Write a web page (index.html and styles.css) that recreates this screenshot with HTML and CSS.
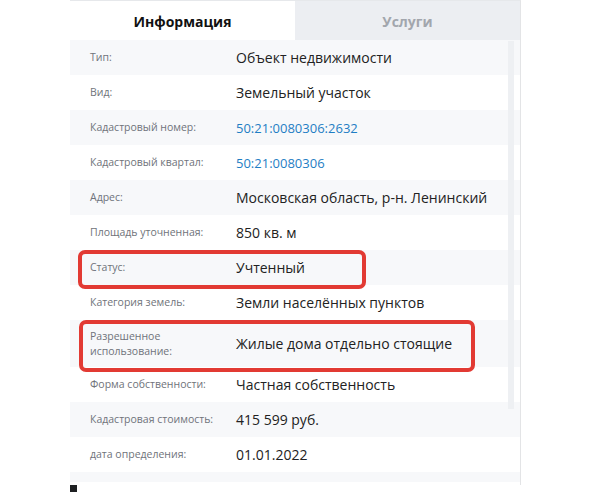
FILE: index.html
```html
<!DOCTYPE html>
<html lang="ru">
<head>
<meta charset="utf-8">
<link rel="stylesheet" href="styles.css">
</head>
<body>
<div class="page">
  <div class="panel">
    <div class="tabs">
      <div class="tab active">Информация</div>
      <div class="tab">Услуги</div>
    </div>
    <div class="rows">
      <div class="row"><div class="label">Тип:</div><div class="value">Объект недвижимости</div></div>
      <div class="row"><div class="label">Вид:</div><div class="value">Земельный участок</div></div>
      <div class="row"><div class="label">Кадастровый номер:</div><div class="value link">50:21:0080306:2632</div></div>
      <div class="row"><div class="label">Кадастровый квартал:</div><div class="value link">50:21:0080306</div></div>
      <div class="row"><div class="label">Адрес:</div><div class="value">Московская область, р-н. Ленинский</div></div>
      <div class="row"><div class="label">Площадь уточненная:</div><div class="value">850 кв. м</div></div>
      <div class="row"><div class="label">Статус:</div><div class="value">Учтенный</div></div>
      <div class="row"><div class="label">Категория земель:</div><div class="value">Земли населённых пунктов</div></div>
      <div class="row tall"><div class="label">Разрешенное<br>использование:</div><div class="value">Жилые дома отдельно стоящие</div></div>
      <div class="row"><div class="label">Форма собственности:</div><div class="value">Частная собственность</div></div>
      <div class="row"><div class="label">Кадастровая стоимость:</div><div class="value">415 599 руб.</div></div>
      <div class="row"><div class="label">дата определения:</div><div class="value">01.01.2022</div></div>
      <div class="row end"></div>
    </div>
    <div class="scrollbar"></div>
    <div class="mark mark-status"></div>
    <div class="mark mark-use"></div>
  </div>
  <div class="square"></div>
</div>
</body>
</html>
```
FILE: styles.css
```css
html, body {
  margin: 0;
  padding: 0;
  background: #ffffff;
}
body {
  font-family: "Open Sans", "Noto Sans", "DejaVu Sans", sans-serif;
  width: 591px;
  height: 492px;
  overflow: hidden;
}
.page {
  display: flex;
  flex-direction: column;
  padding-left: 70px;
}
.panel {
  position: relative;
  width: 450px;
  border-right: 1px solid #e3e4e6;
  border-top: 1px solid #e6e8eb;
  padding-bottom: 3px;
}
.tabs {
  display: grid;
  grid-template-columns: 225px 225px;
  height: 39px;
}
.tab {
  display: flex;
  align-items: center;
  justify-content: center;
  font-size: 14px;
  font-weight: 700;
  color: #a2a6ad;
  background: #eceef2;
  padding-top: 1px;
}
.tab.active {
  background: #ffffff;
  color: #111111;
}
.rows {
  display: flex;
  flex-direction: column;
}
.row {
  display: grid;
  grid-template-columns: 146px 1fr;
  align-items: center;
  height: 35px;
  padding-left: 20px;
}
.row:nth-child(odd) {
  background: #f7f8fa;
}
.row.tall {
  height: 47px;
}
.row.end {
  height: 10px;
}
.label {
  font-size: 10.5px;
  line-height: 15px;
  color: #6f737a;
}
.value {
  font-size: 14px;
  color: #222222;
}
.value.link {
  font-size: 13px;
  color: #1f7ec4;
}
.scrollbar {
  position: absolute;
  left: 438px;
  top: 40px;
  width: 6px;
  height: 368px;
  background: #eef0f3;
}
.mark {
  position: absolute;
  border: 4px solid #e23a33;
  border-radius: 7px;
  box-sizing: border-box;
}
.mark-status {
  left: 8px;
  top: 249px;
  width: 288px;
  height: 39px;
}
.mark-use {
  left: 9px;
  top: 319px;
  width: 396px;
  height: 52px;
}
.square {
  width: 7px;
  height: 7px;
  background: #1e2022;
  margin-top: 0;
}
```
